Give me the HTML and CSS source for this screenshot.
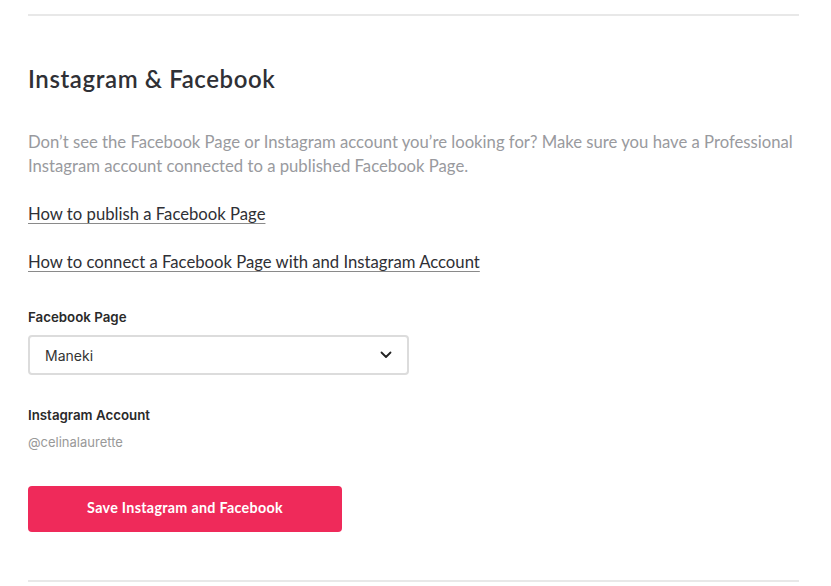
FILE: index.html
```html
<!DOCTYPE html>
<html lang="en">
<head>
    <meta charset="UTF-8">
    <title>Instagram &amp; Facebook</title>
    <meta name="viewport" content="width=device-width, initial-scale=1.0">
    <link rel="stylesheet" href="styles.css">
</head>
<body>
    <div class="section">
        <h2 class="title">Instagram &amp; Facebook</h2>
        <p class="help">Don’t see the Facebook Page or Instagram account you’re looking for? Make sure you have a Professional Instagram account connected to a published Facebook Page.</p>
        <a class="link" href="#">How to publish a Facebook Page</a>
        <a class="link" href="#">How to connect a Facebook Page with and Instagram Account</a>

        <label class="field-label" for="page">Facebook Page</label>
        <div class="select">
            <span>Maneki</span>
            <svg width="12" height="8" viewBox="0 0 12 8"><path d="M1.5 1.5 L6 6 L10.5 1.5" fill="none" stroke="#222" stroke-width="1.8" stroke-linecap="round" stroke-linejoin="round"/></svg>
        </div>

        <div class="field-label">Instagram Account</div>
        <div class="account">@celinalaurette</div>

        <button class="save">Save Instagram and Facebook</button>
    </div>
</body>
</html>
```

FILE: styles.css
```css
body { margin: 0; background: #fff; font-family: Lato, "Noto Sans", sans-serif; color: #2f3035; }
.section { margin: 14px 32px 0 28px; border-top: 2px solid #e8e8e8; border-bottom: 2px solid #e8e8e8; padding: 49px 0 48px; display: flex; flex-direction: column; align-items: flex-start; }
.title { margin: 0 0 37px; font-size: 24px; font-weight: 600; line-height: 28px; color: #2f3035; letter-spacing: 0.6px; }
.help { margin: 0 0 24px; font-size: 16.7px; line-height: 24px; color: #999a9e; }
.link { font-size: 16.7px; line-height: 24px; color: #2f3035; text-decoration: underline; text-decoration-color: #8a8a8a; text-underline-offset: 3px; margin-bottom: 24px; }
.field-label { display: block; margin-top: 9px; font-family: Inter, "Noto Sans", sans-serif; font-size: 13.3px; font-weight: 600; line-height: 20px; color: #2a2a2a; }
.select { box-sizing: border-box; width: 381px; height: 40px; margin-top: 8px; border: 2px solid #dcdcdc; border-radius: 4px; padding: 0 15px; display: flex; align-items: center; justify-content: space-between; font-family: Inter, "Noto Sans", sans-serif; font-size: 14px; color: #333; }
.field-label + .account { margin-top: 7px; }
.account { font-family: Inter, "Noto Sans", sans-serif; font-size: 13px; color: #999; line-height: 20px; }
.select + .field-label { margin-top: 30px; }
.save { margin-top: 34px; width: 314px; height: 46px; padding: 0 0 4px; border: none; border-radius: 4px; background: #ef2a5a; color: #fff; font-family: Lato, "Noto Sans", sans-serif; font-size: 14.3px; font-weight: 700; letter-spacing: 0.3px; cursor: pointer; }
```
